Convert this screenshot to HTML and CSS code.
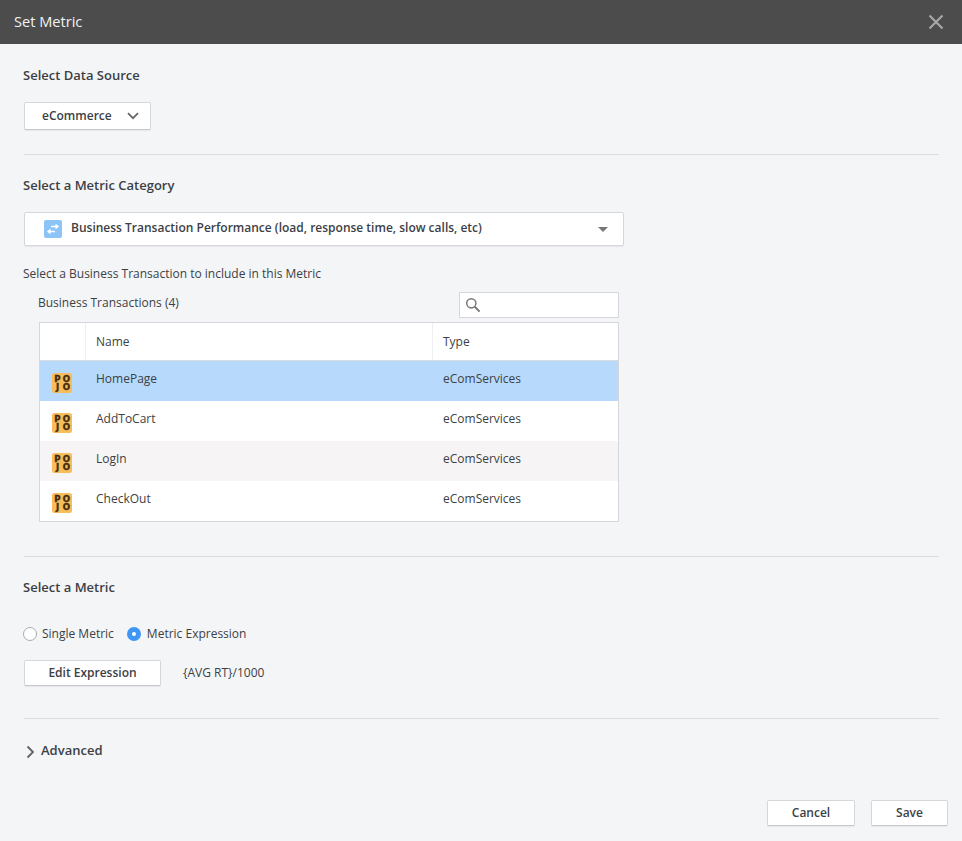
FILE: index.html
```html
<!DOCTYPE html>
<html lang="en">
<head>
<meta charset="utf-8">
<title>Set Metric</title>
<link rel="stylesheet" href="styles.css">
</head>
<body>
<div class="dialog">
  <header class="titlebar">
    <h1 class="title">Set Metric</h1>
    <svg class="close" width="16" height="16" viewBox="0 0 16 16"><path d="M1.5 1.5l13 13M14.5 1.5l-13 13" stroke="#a6a6a6" stroke-width="2.2" fill="none"/></svg>
  </header>
  <main class="content">
    <section class="section s-source">
      <h2 class="heading">Select Data Source</h2>
      <button class="btn btn-source">
        <span>eCommerce</span>
        <svg width="12" height="8" viewBox="0 0 12 8"><path d="M1 1.2l5 5 5-5" stroke="#666" stroke-width="1.7" fill="none"/></svg>
      </button>
    </section>
    <section class="section s-category">
      <h2 class="heading">Select a Metric Category</h2>
      <div class="select">
        <svg class="bt-icon" width="18" height="18" viewBox="0 0 18 18"><rect width="18" height="18" rx="2" fill="#8cc4f7"/><path d="M7 6.5h6.5M11.5 4.5l2.5 2-2.5 2M11 11.5H4.5M6.5 9.5l-2.5 2 2.5 2" stroke="#fff" stroke-width="1.4" fill="none"/></svg>
        <span class="select-text">Business Transaction Performance (load, response time, slow calls, etc)</span>
        <span class="caret"></span>
      </div>
      <p class="hint">Select a Business Transaction to include in this Metric</p>
      <div class="grid-wrap">
        <div class="grid-top">
          <span class="grid-label">Business Transactions (4)</span>
          <div class="search">
            <svg width="16" height="16" viewBox="0 0 16 16"><circle cx="6.3" cy="6.3" r="4.6" stroke="#777" stroke-width="1.5" fill="none"/><path d="M9.8 9.8l4.8 4.8" stroke="#777" stroke-width="2" fill="none"/></svg>
          </div>
        </div>
        <div class="table">
          <div class="row head">
            <div class="c-icon"></div>
            <div class="c-name">Name</div>
            <div class="c-type">Type</div>
          </div>
          <div class="row selected">
            <div class="c-icon"><svg class="pojo" width="20" height="20" viewBox="0 0 20 20"><rect width="20" height="20" rx="2.5" fill="#f7bd5b"/><g class="pojo-t"><text x="5.5" y="8.5">P</text><text x="14.5" y="8.5">O</text><text x="5.5" y="17.2">J</text><text x="14.5" y="17.2">O</text></g></svg></div>
            <div class="c-name">HomePage</div>
            <div class="c-type">eComServices</div>
          </div>
          <div class="row">
            <div class="c-icon"><svg class="pojo" width="20" height="20" viewBox="0 0 20 20"><rect width="20" height="20" rx="2.5" fill="#f7bd5b"/><g class="pojo-t"><text x="5.5" y="8.5">P</text><text x="14.5" y="8.5">O</text><text x="5.5" y="17.2">J</text><text x="14.5" y="17.2">O</text></g></svg></div>
            <div class="c-name">AddToCart</div>
            <div class="c-type">eComServices</div>
          </div>
          <div class="row alt">
            <div class="c-icon"><svg class="pojo" width="20" height="20" viewBox="0 0 20 20"><rect width="20" height="20" rx="2.5" fill="#f7bd5b"/><g class="pojo-t"><text x="5.5" y="8.5">P</text><text x="14.5" y="8.5">O</text><text x="5.5" y="17.2">J</text><text x="14.5" y="17.2">O</text></g></svg></div>
            <div class="c-name">LogIn</div>
            <div class="c-type">eComServices</div>
          </div>
          <div class="row">
            <div class="c-icon"><svg class="pojo" width="20" height="20" viewBox="0 0 20 20"><rect width="20" height="20" rx="2.5" fill="#f7bd5b"/><g class="pojo-t"><text x="5.5" y="8.5">P</text><text x="14.5" y="8.5">O</text><text x="5.5" y="17.2">J</text><text x="14.5" y="17.2">O</text></g></svg></div>
            <div class="c-name">CheckOut</div>
            <div class="c-type">eComServices</div>
          </div>
        </div>
      </div>
    </section>
    <section class="section s-metric">
      <h2 class="heading">Select a Metric</h2>
      <div class="radios">
        <label class="radio"><span class="dot"></span>Single Metric</label>
        <label class="radio"><span class="dot on"></span>Metric Expression</label>
      </div>
      <div class="expr">
        <button class="btn btn-expr">Edit Expression</button>
        <span class="expr-text">{AVG RT}/1000</span>
      </div>
    </section>
    <section class="section s-adv">
      <svg class="adv-chevron" width="9" height="14" viewBox="0 0 9 14"><path d="M1.5 1.5l5.5 5.5-5.5 5.5" stroke="#666" stroke-width="1.9" fill="none"/></svg>
      <h2 class="heading">Advanced</h2>
    </section>
  </main>
  <footer class="footer">
    <button class="btn btn-cancel">Cancel</button>
    <button class="btn btn-save">Save</button>
  </footer>
</div>
</body>
</html>
```
FILE: styles.css
```css
* { box-sizing: border-box; }
html, body { margin: 0; height: 100%; }
body {
  background: #f4f5f7;
  color: #3c3f45;
  font-family: "Open Sans", "Liberation Sans", sans-serif;
  font-size: 12px;
  overflow: hidden;
}
.dialog { height: 841px; display: flex; flex-direction: column; }
.titlebar {
  height: 44px;
  background: #4c4c4c;
  display: flex;
  align-items: center;
  justify-content: space-between;
  padding: 0 18px 0 14px;
  flex: none;
}
.title { margin: 0 0 2px; font-size: 14.6px; font-weight: 400; color: #f2f2f2; }
.content { padding: 0 23px 0 24px; flex: 1; }
.section { border-bottom: 1px solid #d9dbdf; }
.heading { margin: 0 0 0 -1px; font-size: 13px; line-height: 18px; font-weight: 600; color: #3c3f45; }
.btn {
  display: flex;
  align-items: center;
  justify-content: center;
  background: #fff;
  border: 1px solid #d5d7db;
  border-bottom-color: #c6c8cd;
  border-radius: 2px;
  font-family: inherit;
  font-size: 12px;
  font-weight: 600;
  color: #3c3f45;
  padding: 0 0 2px 0;
  box-shadow: 0 1px 1px rgba(0,0,0,.06);
}
.s-source { height: 111px; padding-top: 22px; }
.btn-source { width: 127px; height: 28px; margin-top: 18px; padding: 0 11px 2px 17px; justify-content: space-between; }
.btn-source svg { margin-top: 2px; }
.s-category { height: 402px; padding-top: 21px; }
.select {
  width: 600px;
  height: 34px;
  margin-top: 18px;
  background: #fff;
  border: 1px solid #d5d7db;
  border-radius: 2px;
  box-shadow: 0 1px 1px rgba(0,0,0,.06);
  display: flex;
  align-items: center;
  padding: 0 15px 0 19px;
  font-weight: 600;
}
.bt-icon { flex: none; }
.select-text { margin: 0 0 3px 9px; flex: 1; }
.caret { width: 0; height: 0; border-left: 5px solid transparent; border-right: 5px solid transparent; border-top: 5px solid #777; }
.hint { margin: 19px 0 0 -1px; line-height: 18px; }
.grid-wrap { margin-left: 15px; width: 580px; }
.grid-top { display: flex; justify-content: space-between; align-items: center; height: 26px; margin-top: 9px; }
.grid-label { margin: 0 0 6px -1px; }
.search {
  width: 160px;
  height: 26px;
  background: #fff;
  border: 1px solid #d5d7db;
  display: flex;
  align-items: center;
  padding-left: 5px;
}
.table { margin-top: 4px; border: 1px solid #d5d7db; background: #fff; }
.row { display: flex; height: 40px; }
.row.head { height: 38px; border-bottom: 1px solid #d9dbdf; align-items: center; }
.row.selected { background: #b7dafc; }
.row.alt { background: #f6f4f4; }
.c-icon { width: 46px; flex: none; padding: 12px 0 0 12px; align-self: stretch; }
.row .c-name { width: 347px; padding: 9px 0 0 10px; line-height: 18px; }
.row .c-type { padding: 9px 0 0 10px; line-height: 18px; }
.row.head .c-icon { border-right: 1px solid #eeeff1; padding: 0; }
.row.head .c-name { width: 347px; padding: 0 0 0 10px; border-right: 1px solid #eeeff1; align-self: stretch; display: flex; align-items: center; }
.row.head .c-type { padding: 0 0 0 10px; }
.pojo { display: block; }
.pojo-t text { font-family: "DejaVu Sans", sans-serif; font-size: 8.6px; font-weight: 700; fill: #3f2c10; stroke: #3f2c10; stroke-width: .35px; text-anchor: middle; }
.s-metric { height: 162px; padding-top: 21px; }
.radios { display: flex; gap: 13px; margin: 28px 0 0 -1px; height: 18px; align-items: center; }
.radio { display: flex; align-items: center; gap: 5px; }
.radio:last-child { gap: 6px; }
.dot { width: 14px; height: 14px; border-radius: 50%; background: #fff; border: 1px solid #a9abaf; display: block; margin-top: 1px; }
.dot.on { border: 5px solid #3f97f5; background: #fff; }
.expr { display: flex; align-items: center; margin-top: 18px; }
.btn-expr { width: 137px; height: 26px; }
.expr-text { margin: 0 0 1px 22px; }
.s-adv { border-bottom: 0; display: flex; align-items: center; gap: 6px; padding: 22px 0 0 2px; }
.s-adv .heading { margin-left: 0; }
.adv-chevron { margin-top: 3px; }
.footer { display: flex; justify-content: flex-end; gap: 16px; padding: 0 14px 15px 0; flex: none; }
.btn-cancel { width: 88px; height: 26px; }
.btn-save { width: 77px; height: 26px; }
```
